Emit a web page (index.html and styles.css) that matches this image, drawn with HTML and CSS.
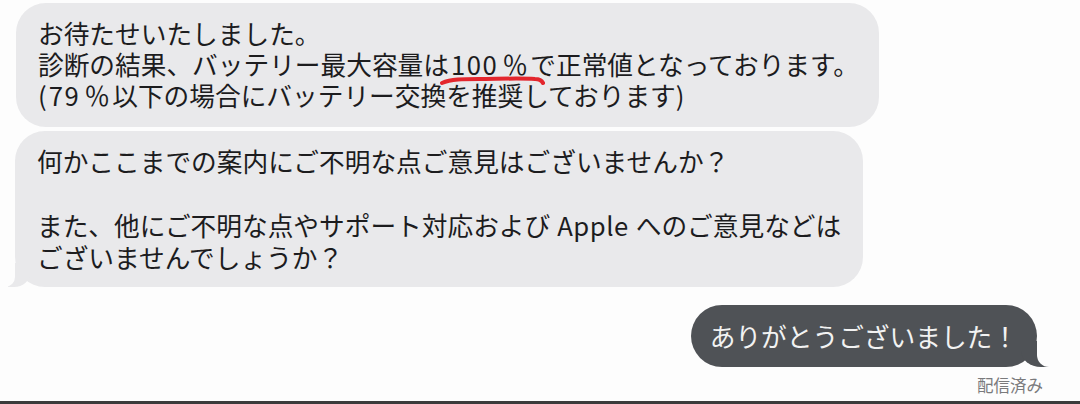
FILE: index.html
```html
<!DOCTYPE html>
<html lang="ja">

<head>
    <meta charset="UTF-8">
    <meta name="viewport" content="width=device-width, initial-scale=1.0">
    <title>メッセージ</title>
    <link rel="stylesheet" href="styles.css">
</head>

<body>
    <main class="thread">
        <div class="bubble received first">
            お待たせいたしました。<br>
            診断の結果、バッテリー最大容量は<span class="marked"><span class="num">100</span><span class="pct">％</span><svg class="marker" width="108" height="14" viewBox="0 0 108 14"><path d="M3 9 C 12 5, 24 5, 40 5 S 80 4, 96 5 C 101 5, 103 7, 104 9" /></svg></span>で正常値となっております。<br>
            (<span class="num">79</span><span class="pct">％</span>以下の場合にバッテリー交換を推奨しております)
        </div>
        <div class="bubble received tail">
            何かここまでの案内にご不明な点ご意見はございませんか？<br>
            <br>
            また、他にご不明な点やサポート対応および<span class="latin">Apple</span>へのご意見などは<br>
            ございませんでしょうか？
        </div>
        <div class="bubble sent tail">ありがとうございました！</div>
        <div class="status">配信済み</div>
    </main>
</body>

</html>
```

FILE: styles.css
```css
body {
    margin: 0;
    height: 404px;
    box-sizing: border-box;
    background-color: #fdfdfd;
    border-bottom: 3px solid #3b3b3b;
    font-family: 'Noto Sans CJK JP', 'Noto Sans', sans-serif;
    color: #1c1c1e;
    overflow: hidden;
}

.thread {
    display: flex;
    flex-direction: column;
    padding-top: 3px;
}

.bubble {
    position: relative;
    font-size: 25.7px;
    white-space: nowrap;
    border-radius: 30px;
}

.received {
    align-self: flex-start;
    margin-left: 16px;
    background-color: #e9e9eb;
}

.received.first {
    padding: 14px 20px 17px 22px;
    line-height: 31px;
}

.received.tail {
    margin-top: 4px;
    margin-left: 15px;
    padding: 14px 22px;
    line-height: 32px;
}

.received.tail::before {
    content: "";
    position: absolute;
    left: -7px;
    bottom: 0;
    width: 22px;
    height: 24px;
    background-color: #e9e9eb;
    border-bottom-right-radius: 16px 14px;
}

.received.tail::after {
    content: "";
    position: absolute;
    left: -10px;
    bottom: 0;
    width: 10px;
    height: 24px;
    background-color: #fdfdfd;
    border-bottom-right-radius: 10px;
}

.sent {
    align-self: flex-end;
    margin-top: 18px;
    margin-right: 43px;
    padding: 0 19px;
    line-height: 62px;
    border-radius: 31px;
    background-color: #4f5256;
    color: #f2f2f2;
}

.sent.tail::before {
    content: "";
    position: absolute;
    right: -12px;
    bottom: 0;
    width: 28px;
    height: 26px;
    background-color: #4f5256;
    border-bottom-left-radius: 20px 16px;
}

.sent.tail::after {
    content: "";
    position: absolute;
    right: -16px;
    bottom: 0;
    width: 16px;
    height: 28px;
    background-color: #fdfdfd;
    border-bottom-left-radius: 12px;
}

.status {
    align-self: flex-end;
    margin-top: 8px;
    margin-right: 37px;
    font-size: 16.5px;
    line-height: 20px;
    color: #7a7a7c;
}

.num {
    letter-spacing: 1.5px;
    margin-left: 2px;
}

.pct {
    display: inline-block;
    width: 25px;
    margin-left: 4px;
    margin-right: 3px;
}

.latin {
    margin: 0 7px;
    letter-spacing: 0.5px;
}

.marked {
    position: relative;
}

.marker {
    position: absolute;
    left: -10px;
    bottom: -6px;
    fill: none;
    stroke: #e3262d;
    stroke-width: 4;
    stroke-linecap: round;
}
```
